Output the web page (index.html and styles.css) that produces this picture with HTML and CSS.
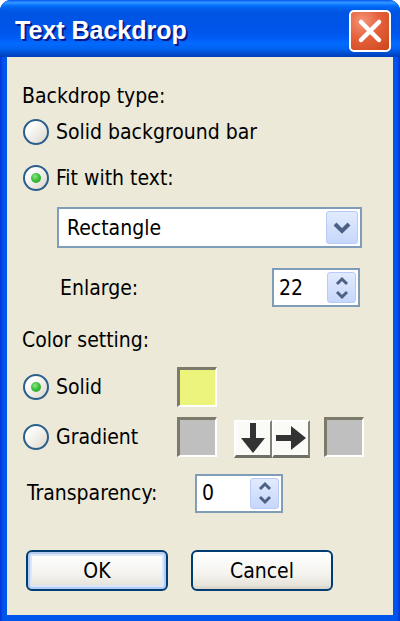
FILE: index.html
```html
<!DOCTYPE html>
<html lang="en">
<head>
    <meta charset="UTF-8">
    <meta name="viewport" content="width=device-width, initial-scale=1.0">
    <title>Text Backdrop</title>
    <link rel="stylesheet" href="styles.css">
</head>
<body>

    <div class="window">
        <!-- Title bar -->
        <div class="titlebar">
            <span class="title">Text Backdrop</span>
            <button class="close-btn" aria-label="Close">
                <svg width="26" height="26" viewBox="0 0 26 26">
                    <path d="M4 4 L22 22 M22 4 L4 22" stroke="#fff" stroke-width="4.5" stroke-linecap="round"/>
                </svg>
            </button>
        </div>

        <div class="content">
            <div class="label-row section-1">Backdrop type:</div>

            <label class="radio-row first">
                <span class="radio"></span>
                <span>Solid background bar</span>
            </label>
            <label class="radio-row second">
                <span class="radio checked"></span>
                <span>Fit with text:</span>
            </label>

            <div class="dropdown">
                <span class="dropdown-text">Rectangle</span>
                <span class="dropdown-btn">
                    <svg width="18" height="12" viewBox="0 0 18 12">
                        <polyline points="2,2 9,9 16,2" fill="none" stroke="#4d6185" stroke-width="4"/>
                    </svg>
                </span>
            </div>

            <div class="enlarge-row">
                <span>Enlarge:</span>
                <div class="spin">
                    <span class="spin-value">22</span>
                    <span class="spin-btn">
                        <svg width="16" height="26" viewBox="0 0 16 26">
                            <polyline points="3,9 8,4 13,9" fill="none" stroke="#4d6185" stroke-width="3"/>
                            <polyline points="3,17 8,22 13,17" fill="none" stroke="#4d6185" stroke-width="3"/>
                        </svg>
                    </span>
                </div>
            </div>

            <div class="label-row section-2">Color setting:</div>

            <div class="color-row solid-row">
                <label class="radio-label">
                    <span class="radio checked"></span>
                    <span>Solid</span>
                </label>
                <span class="swatch yellow"></span>
            </div>

            <div class="color-row gradient-row">
                <label class="radio-label">
                    <span class="radio"></span>
                    <span>Gradient</span>
                </label>
                <span class="swatch grey"></span>
                <div class="dir-buttons">
                    <button class="dir-btn" aria-label="Vertical">
                        <svg width="26" height="32" viewBox="0 0 26 32">
                            <path d="M13 1 V18" stroke="#333" stroke-width="6"/>
                            <polygon points="1,16 25,16 13,31" fill="#333"/>
                        </svg>
                    </button>
                    <button class="dir-btn" aria-label="Horizontal">
                        <svg width="32" height="26" viewBox="0 0 32 26">
                            <path d="M1 13 H18" stroke="#333" stroke-width="6"/>
                            <polygon points="16,1 16,25 31,13" fill="#333"/>
                        </svg>
                    </button>
                </div>
                <span class="swatch grey last"></span>
            </div>

            <div class="transparency-row">
                <span class="transparency-label">Transparency:</span>
                <div class="spin">
                    <span class="spin-value">0</span>
                    <span class="spin-btn">
                        <svg width="16" height="26" viewBox="0 0 16 26">
                            <polyline points="3,9 8,4 13,9" fill="none" stroke="#4d6185" stroke-width="3"/>
                            <polyline points="3,17 8,22 13,17" fill="none" stroke="#4d6185" stroke-width="3"/>
                        </svg>
                    </span>
                </div>
            </div>

            <div class="button-row">
                <button class="btn default">OK</button>
                <button class="btn">Cancel</button>
            </div>
        </div>
    </div>

</body>
</html>
```

FILE: styles.css
```css
body {
    margin: 0;
    background: #fff;
    font-family: "DejaVu Sans Condensed", "DejaVu Sans", sans-serif;
    font-size: 21px;
    color: #000;
}
.window {
    width: 400px;
    height: 621px;
    box-sizing: border-box;
    display: flex;
    flex-direction: column;
    border-radius: 11px 11px 0 0;
    background: linear-gradient(to right, #0831d9 0px, #0055ea 3px, #0055ea 397px, #0831d9 400px);
    overflow: hidden;
}
.titlebar {
    height: 57px;
    display: flex;
    justify-content: space-between;
    align-items: flex-start;
    padding: 0 9px 0 15px;
    background: linear-gradient(to bottom, #0058ee 0%, #3593ff 4%, #288eff 6%, #127dff 8%, #036ffc 10%, #0262ee 14%, #0057e5 20%, #0054e3 24%, #0055eb 56%, #005bf5 66%, #026afe 76%, #0062ef 86%, #0052d6 92%, #0046c5 96%, #0040b8 100%);
}
.title {
    font-family: "Liberation Sans", Arial, sans-serif;
    font-weight: bold;
    font-size: 25px;
    color: #fff;
    margin-top: 16px;
    text-shadow: 2px 2px 0 #0a1883;
}
.close-btn {
    width: 42px;
    height: 42px;
    margin-top: 10px;
    padding: 0;
    border: 2px solid #fff;
    border-radius: 5px;
    background: radial-gradient(circle at 30% 25%, #f39576 0%, #e5603b 45%, #cc4419 100%);
    display: flex;
    align-items: center;
    justify-content: center;
}
.content {
    flex: 1;
    margin: 0 7px 6px 7px;
    background: #ece9d8;
    padding-left: 15px;
}
.label-row {
    height: 26px;
    display: flex;
    align-items: center;
}
.section-1 {
    margin-top: 26px;
}
.section-2 {
    margin-top: 20px;
}
.radio-row, .radio-label {
    display: flex;
    align-items: center;
    gap: 7px;
    height: 26px;
    margin-left: 1px;
}
.radio-row.first {
    margin-top: 10px;
}
.radio-row.second {
    margin-top: 20px;
}
.radio {
    width: 26px;
    height: 26px;
    box-sizing: border-box;
    border: 2px solid #2a5f8c;
    border-radius: 50%;
    background: linear-gradient(135deg, #ffffff 20%, #dcd7cb 100%);
    display: flex;
    align-items: center;
    justify-content: center;
}
.radio.checked::after {
    content: "";
    width: 10px;
    height: 10px;
    border-radius: 50%;
    background: radial-gradient(circle at 40% 35%, #8ae98a 0%, #3fbf3f 45%, #1e9a1e 100%);
}
.dropdown {
    margin: 16px 0 0 35px;
    width: 305px;
    height: 41px;
    box-sizing: border-box;
    border: 2px solid #7f9db9;
    background: #fff;
    display: flex;
    align-items: center;
    justify-content: space-between;
    padding: 0 2px 0 8px;
}
.dropdown-btn, .spin-btn {
    box-sizing: border-box;
    border: 1px solid #b7cbf6;
    border-radius: 3px;
    background: linear-gradient(to bottom, #e2ebfe 0%, #c6d7fa 100%);
    display: flex;
    align-items: center;
    justify-content: center;
}
.dropdown-btn {
    width: 32px;
    height: 33px;
}
.enlarge-row {
    margin-top: 20px;
    height: 39px;
    width: 338px;
    padding-left: 38px;
    box-sizing: border-box;
    display: flex;
    align-items: center;
    justify-content: space-between;
}
.spin {
    width: 88px;
    height: 39px;
    box-sizing: border-box;
    border: 2px solid #7f9db9;
    background: #fff;
    display: flex;
    align-items: center;
    justify-content: space-between;
    padding: 0 2px 0 5px;
}
.spin-btn {
    width: 29px;
    height: 31px;
}
.color-row {
    display: flex;
    align-items: center;
    height: 40px;
}
.color-row .radio-label {
    width: 154px;
}
.solid-row {
    margin-top: 14px;
}
.gradient-row {
    margin-top: 10px;
}
.swatch {
    width: 40px;
    height: 40px;
    box-sizing: border-box;
    border-style: solid;
    border-width: 3px 2px 2px 3px;
    border-color: #7c7a6a #ffffff #ffffff #7c7a6a;
}
.swatch.yellow {
    background: #edf47c;
}
.swatch.grey {
    background: #bfbfbf;
}
.swatch.last {
    margin-left: 14px;
}
.dir-buttons {
    display: flex;
    margin-left: 17px;
    margin-top: 3px;
}
.dir-btn {
    width: 38px;
    height: 38px;
    padding: 0;
    border-style: solid;
    border-width: 2px 2px 3px 2px;
    border-color: #ffffff #808078 #6f6f66 #ffffff;
    background: #fafaf6;
    display: flex;
    align-items: center;
    justify-content: center;
}
.transparency-row {
    margin-top: 16px;
    height: 40px;
    display: flex;
    align-items: center;
    padding-left: 5px;
}
.transparency-label {
    width: 168px;
}
.button-row {
    margin-top: 37px;
    display: flex;
    gap: 23px;
    padding-left: 4px;
}
.btn {
    width: 142px;
    height: 41px;
    font-family: "DejaVu Sans Condensed", "DejaVu Sans", sans-serif;
    font-size: 21px;
    color: #000;
    border: 2px solid #003c74;
    border-radius: 6px;
    background: linear-gradient(to bottom, #ffffff 0%, #f4f3ee 60%, #e6e3da 90%, #d6d0c5 100%);
}
.btn.default {
    box-shadow: inset 0 0 0 2px #b4ccf2, inset 0 0 0 4px #d9e7fb;
}
```
